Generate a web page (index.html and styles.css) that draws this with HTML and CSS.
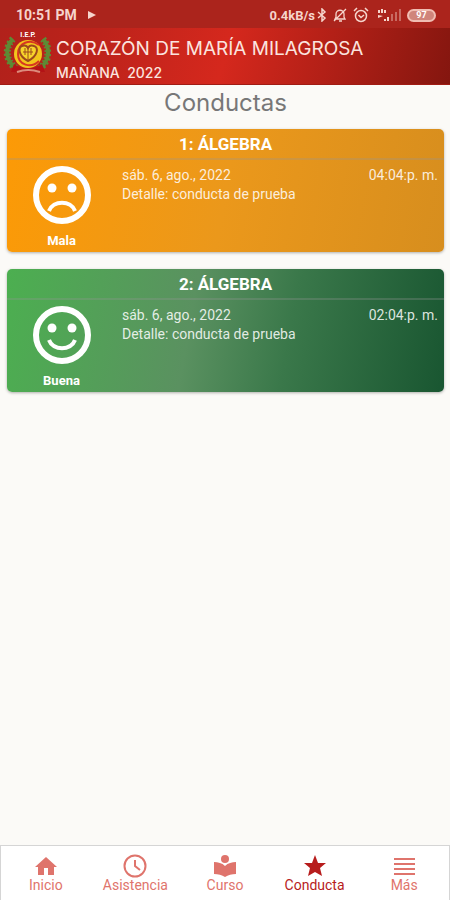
FILE: index.html
```html
<!DOCTYPE html>
<html lang="es">
<head>
    <meta charset="UTF-8">
    <meta name="viewport" content="width=device-width, initial-scale=1.0">
    <title>Conductas</title>
    <link rel="stylesheet" href="styles.css">
</head>
<body>
    <div class="status">
        <span class="clock">10:51 PM</span>
        <svg class="play" width="10" height="10" viewBox="0 0 10 10"><path d="M1 1l8 4-8 4z" fill="currentColor"/></svg>
        <span class="speed">0.4kB/s</span>
        <svg width="10" height="14" viewBox="0 0 10 14" fill="none" stroke="currentColor" stroke-width="1.5"><path d="M1 4l7 6-3 3V1l3 3-7 6"/></svg>
        <svg class="bell" width="14" height="14" viewBox="0 0 14 14" fill="none" stroke="currentColor" stroke-width="1.3"><path d="M2 11h10l-1-2V6c0-5-8-5-8 0v3zM6 13h3M13 1L1 13"/></svg>
        <svg class="alarm" width="16" height="16" viewBox="0 0 16 16" fill="none" stroke="currentColor" stroke-width="1.5"><circle cx="8" cy="9" r="5.5"/><path d="M1 4l3-3M15 4l-3-3M5.500 8l2.500 2.500L11 8"/></svg>
        <svg class="signal" width="24" height="14" viewBox="0 0 24 14" fill="currentColor"><path d="M1 2h2v3H1zM4 1h2v4H4zM7 2h2v3H7zM1 7l5 1-5 2zM7 11h2v2H7zM10 9h2v4h-2z"/><path opacity=".4" d="M14 6h2v7h-2zM18 4h2v9h-2zM22 1h2v12h-2z"/></svg>
        <span class="battery">97</span>
    </div>

    <header class="header">
        <svg class="crest" width="48" height="48" viewBox="0 0 48 48">
            <text x="25" y="7" text-anchor="middle" class="crest-text">I.E.P.</text>
            <g fill="none" stroke="#5e8a35">
                <path d="M10 9C1 18 3 32 13 38M40 9c8 9 6 23-3 29" stroke-width="4"/>
                <path d="M10 9C1 18 3 32 13 38M40 9c8 9 6 23-3 29" stroke-width="7" stroke-dasharray="2 2"/>
            </g>
            <path d="M11 34c8 6 20 6 28 0l3 8H8z" fill="#b31316"/>
            <path d="M14 42q11-4 23 0" fill="none" stroke="#dc8c7c" stroke-width="2"/>
            <circle cx="25" cy="24" r="14" fill="#f2c51c"/>
            <path d="M36 15C27 8 15 13 15 24s13 15 21 7" fill="none" stroke="#d73720" stroke-width="2"/>
            <path d="M25 31c-10-5-10-14-6-15 3-1 5 0 6 2 1-2 3-3 6-2 5 1 4 10-6 15z" fill="#f6d32b" stroke="#9c491d" stroke-width="2"/>
            <path d="M25 18v12M20 22h10M22 18v7M28 18v7" fill="none" stroke="#9c491d" stroke-width="1"/>
        </svg>
        <div class="school">
            <div class="name">CORAZÓN DE MARÍA MILAGROSA</div>
            <div class="shift">MAÑANA&nbsp; 2022</div>
        </div>
    </header>

    <main>
        <h1>Conductas</h1>

        <section class="card bad">
            <h2>1: ÁLGEBRA</h2>
            <div class="card-body">
                <div class="mood">
                    <svg width="58" height="58" viewBox="0 0 58 58"><circle cx="29" cy="29" r="26" fill="none" stroke="#fff" stroke-width="6"/><circle cx="19" cy="22" r="4.500" fill="#fff"/><circle cx="39" cy="22" r="4.500" fill="#fff"/><path d="M16 45c4-11 22-11 26 0" fill="none" stroke="#fff" stroke-width="4"/></svg>
                    <span>Mala</span>
                </div>
                <div class="detail">
                    <div>sáb. 6, ago., 2022</div>
                    <div>Detalle: conducta de prueba</div>
                </div>
                <div class="time">04:04:p. m.</div>
            </div>
        </section>

        <section class="card good">
            <h2>2: ÁLGEBRA</h2>
            <div class="card-body">
                <div class="mood">
                    <svg width="58" height="58" viewBox="0 0 58 58"><circle cx="29" cy="29" r="26" fill="none" stroke="#fff" stroke-width="6"/><circle cx="19" cy="22" r="4.500" fill="#fff"/><circle cx="39" cy="22" r="4.500" fill="#fff"/><path d="M16 34c4 11 22 11 26 0" fill="none" stroke="#fff" stroke-width="4"/></svg>
                    <span>Buena</span>
                </div>
                <div class="detail">
                    <div>sáb. 6, ago., 2022</div>
                    <div>Detalle: conducta de prueba</div>
                </div>
                <div class="time">02:04:p. m.</div>
            </div>
        </section>
    </main>

    <nav class="tabs">
        <a href="#inicio">
            <svg width="24" height="24" viewBox="0 0 24 24" fill="currentColor"><path d="M10 21v-7h4v7h6v-8h3L12 3 1 13h3v8z"/></svg>
            Inicio
        </a>
        <a href="#asistencia">
            <svg width="24" height="24" viewBox="0 0 24 24" fill="none" stroke="currentColor" stroke-width="2"><circle cx="12" cy="12" r="10.500"/><path d="M12 6v6l5 4"/></svg>
            Asistencia
        </a>
        <a href="#curso">
            <svg width="24" height="24" viewBox="0 0 24 24" fill="currentColor"><circle cx="12" cy="5" r="4"/><path d="M12 12C9 9 5 8 1 8v12c4 0 8 1 11 3 3-2 7-3 11-3V8c-4 0-8 1-11 4z"/></svg>
            Curso
        </a>
        <a href="#conducta" class="active">
            <svg width="24" height="24" viewBox="0 0 24 24" fill="currentColor"><path d="M12 1l3 8h8l-6 5 2 8-7-4-7 4 2-8-6-5h8z"/></svg>
            Conducta
        </a>
        <a href="#mas">
            <svg width="24" height="24" viewBox="0 0 24 24" fill="currentColor"><path d="M2 4h21v2H2zM2 9h21v2H2zM2 14h21v2H2zM2 19h21v2H2z"/></svg>
            Más
        </a>
    </nav>
</body>
</html>
```
FILE: styles.css
```css
* {
    box-sizing: border-box;
}
body {
    margin: 0;
    min-height: 100vh;
    display: flex;
    flex-direction: column;
    background-color: #fbfaf7;
    font-family: Roboto, sans-serif;
}
h1, h2 {
    margin: 0;
}
.status {
    display: flex;
    align-items: center;
    height: 28px;
    padding: 2px 14px 0 16px;
    background-color: #ab241c;
    color: #f6d5cc;
    font-size: 13px;
    font-weight: bold;
}
.status svg {
    flex: none;
}
.clock {
    font-size: 14px;
}
.play {
    margin-left: 10px;
}
.speed {
    margin-left: auto;
    margin-right: 2px;
}
.bell {
    margin-left: 6px;
}
.alarm {
    margin-left: 6px;
}
.signal {
    margin-left: 8px;
}
.battery {
    width: 29px;
    height: 13px;
    margin-left: 6px;
    border: 2px solid #f0bdb2;
    border-radius: 7px;
    background-color: #d0857b;
    color: #fff;
    font-size: 9px;
    line-height: 9px;
    text-align: center;
}
.header {
    display: flex;
    height: 57px;
    padding: 2px 3px 0;
    background: linear-gradient(105deg, #b1211b 0%, #bd231b 22%, #d5281d 50%, #b32017 72%, #84160f 100%);
    border-bottom: 1px solid #a01c14;
    color: #fbe4df;
}
.crest {
    flex: none;
}
.crest-text {
    fill: #fff;
    font-size: 7px;
    font-weight: bold;
}
.school {
    margin-left: 5px;
    padding-top: 7px;
    font-family: Inter, sans-serif;
}
.name {
    font-size: 19px;
    line-height: 24px;
}
.shift {
    font-size: 14px;
    font-weight: 500;
    line-height: 24px;
}
main {
    flex: 1;
    padding: 4px 6px 0 7px;
}
h1 {
    margin-bottom: 12px;
    color: #777;
    font-family: Inter, sans-serif;
    font-size: 24px;
    font-weight: normal;
    line-height: 28px;
    text-align: center;
}
.card {
    height: 123px;
    margin-bottom: 17px;
    border-radius: 5px;
    color: #fff;
    box-shadow: 0 1px 3px rgba(0, 0, 0, 0.3);
}
.bad {
    background: linear-gradient(100deg, #fc9a06, #eb981b 50%, #d78e1e);
}
.good {
    background: linear-gradient(100deg, #4caf50, #5a9160 42%, #3a784a 64%, #195631);
}
h2 {
    height: 31px;
    border-bottom: 2px solid rgba(150, 150, 150, 0.3);
    font-size: 17px;
    line-height: 31px;
    text-align: center;
}
.card-body {
    display: flex;
    padding: 6px 6px 0 0;
    color: rgba(255, 255, 255, 0.85);
    font-size: 14px;
    line-height: 19px;
}
.mood {
    display: flex;
    flex-direction: column;
    align-items: center;
    width: 109px;
    color: #fff;
    font-size: 13px;
    font-weight: bold;
}
.mood span {
    margin-top: 7px;
}
.detail {
    flex: 1;
    padding-left: 6px;
}
.tabs {
    display: flex;
    height: 55px;
    border: 1px solid #d5d5d5;
    border-bottom: 0;
    background-color: #fff;
}
.tabs a {
    flex: 1;
    display: flex;
    flex-direction: column;
    align-items: center;
    padding-top: 8px;
    color: #df746c;
    font-size: 14px;
    line-height: 14px;
    text-decoration: none;
}
.tabs .active {
    color: #b71c1c;
}
```
